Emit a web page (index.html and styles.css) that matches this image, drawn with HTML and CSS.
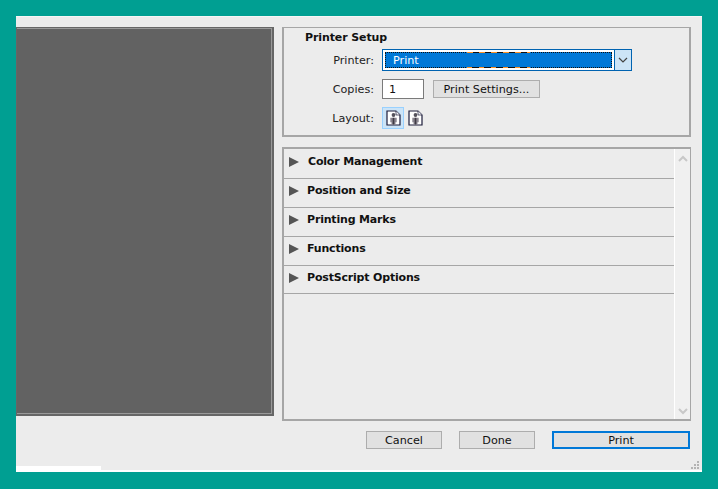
FILE: index.html
```html
<!DOCTYPE html>
<html lang="en">
<head>
<meta charset="utf-8">
<title>Print</title>
<link rel="stylesheet" href="styles.css">
</head>
<body>
<div class="window">
  <div class="main">
    <div class="preview"></div>
    <div class="side">
      <section class="setup">
        <h2 class="setup-title">Printer Setup</h2>
        <div class="form-row printer-row">
          <span class="label">Printer:</span>
          <div class="combo">
            <div class="combo-field">
              <div class="combo-value">Print</div>
              <span class="dash dash-top"></span>
              <span class="dash dash-bottom"></span>
            </div>
            <div class="combo-arrow">
              <svg width="10" height="6" viewBox="0 0 10 6"><path d="M1 1l4 4 4-4" fill="none" stroke="#444" stroke-width="1.2"/></svg>
            </div>
          </div>
        </div>
        <div class="form-row copies-row">
          <span class="label">Copies:</span>
          <div class="copies-input">1</div>
          <button class="btn settings-btn">Print Settings...</button>
        </div>
        <div class="form-row layout-row">
          <span class="label">Layout:</span>
          <div class="layout-btn layout-active">
            <svg width="15" height="16" viewBox="0 0 15 16"><path d="M1 1h9l4 4v10H1z" fill="#fff" stroke="#1c1c3a" stroke-width="1.2"/><path d="M10 1v4h4" fill="#f0f0f4" stroke="#1c1c3a" stroke-width=".7"/><circle cx="7.500" cy="5" r="1.900" fill="#55525c"/><path d="M4.300 7.800h6.400v4.500H9.500V14.500H5.500v-2.200H4.300z" fill="#8a858f"/><path d="M6.700 7.800h1.600v6.700H6.700z" fill="#3e3a44"/></svg>
          </div>
          <div class="layout-btn">
            <svg width="15" height="16" viewBox="0 0 15 16"><path d="M1 1h9l4 4v10H1z" fill="#fff" stroke="#1c1c3a" stroke-width="1.2"/><path d="M10 1v4h4" fill="#f0f0f4" stroke="#1c1c3a" stroke-width=".7"/><circle cx="7.500" cy="5" r="1.900" fill="#55525c"/><path d="M4.300 7.800h6.400v4.500H9.500V14.500H5.500v-2.200H4.300z" fill="#8a858f"/><path d="M6.700 7.800h1.600v6.700H6.700z" fill="#3e3a44"/></svg>
          </div>
        </div>
      </section>
      <section class="accordion">
        <div class="rows">
          <div class="row row-first"><span class="tri"></span><span class="row-text shift">Color Management</span></div>
          <div class="row"><span class="tri"></span><span class="row-text">Position and Size</span></div>
          <div class="row"><span class="tri"></span><span class="row-text">Printing Marks</span></div>
          <div class="row"><span class="tri"></span><span class="row-text">Functions</span></div>
          <div class="row row-last"><span class="tri"></span><span class="row-text">PostScript Options</span></div>
        </div>
        <div class="scrollbar">
          <svg width="10" height="7" viewBox="0 0 10 7"><path d="M1 6l4-4 4 4" fill="none" stroke="#c8c8c8" stroke-width="2"/></svg>
          <svg width="10" height="7" viewBox="0 0 10 7"><path d="M1 1l4 4 4-4" fill="none" stroke="#c8c8c8" stroke-width="2"/></svg>
        </div>
      </section>
    </div>
  </div>
  <div class="actions">
    <button class="btn action-btn">Cancel</button>
    <button class="btn action-btn">Done</button>
    <button class="btn print-btn">Print</button>
  </div>
  <div class="footer">
    <div class="footer-strip"></div>
  </div>
  <svg class="grip" width="8" height="8" viewBox="0 0 8 8" fill="#b4b4b4"><rect x="6" y="0" width="2" height="2"/><rect x="3" y="3" width="2" height="2"/><rect x="6" y="3" width="2" height="2"/><rect x="0" y="6" width="2" height="2"/><rect x="3" y="6" width="2" height="2"/><rect x="6" y="6" width="2" height="2"/></svg>
</div>
</body>
</html>
```

FILE: styles.css
```css
* { box-sizing: border-box; }
html, body { margin: 0; height: 100%; }
body {
  background: #009f92;
  padding: 16px;
  overflow: hidden;
  font-family: "DejaVu Sans", sans-serif;
  font-size: 11.2px;
  color: #111;
}
.window {
  position: relative;
  width: 686px;
  height: 456px;
  background: #ececec;
  border-top: 1px solid #f6f6f6;
  padding-top: 10px;
  display: flex;
  flex-direction: column;
}
.main { display: flex; height: 393px; }
.preview {
  width: 258px;
  height: 389px;
  background: #626262;
  border: 1px solid #666;
  border-right-width: 2px;
  border-bottom-width: 2px;
  box-shadow: inset -1px 0 0 #999, inset 0 1px 0 #999, inset 0 -1px 0 #999;
}
.side { margin-left: 8px; width: 409px; }
.setup {
  height: 110px;
  border: 2px solid #a6a6a6;
  border-top-width: 1px;
  padding-left: 21px;
}
.setup-title {
  margin: 0;
  font-size: 11px;
  letter-spacing: -0.1px;
  font-weight: bold;
  line-height: 16px;
  padding-top: 2px;
  color: #111;
}
.form-row { display: flex; align-items: center; }
.label { width: 69px; text-align: right; margin-right: 8px; color: #222; }
.printer-row { margin-top: 3px; height: 22px; }
.combo { display: flex; width: 250px; height: 22px; border: 1px solid #0063b1; background: #fff; }
.combo-field { position: relative; flex: 1; padding: 2px; }
.combo-value {
  height: 16px;
  background: #0078d7;
  color: #fff;
  outline: 1px dotted #111;
  outline-offset: -1px;
  padding-left: 8px;
  line-height: 17px;
}
.dash {
  position: absolute;
  left: 84px;
  width: 63px;
  height: 1px;
}
.dash-top { top: 2px; background: repeating-linear-gradient(90deg, #ff9326 0 6px, #111 6px 12px); }
.dash-bottom { bottom: 2px; background: repeating-linear-gradient(90deg, #ff9326 0 5px, #111 5px 12px); }
.combo-arrow {
  width: 17px;
  border-left: 1px solid #0063b1;
  background: #cce4f7;
  display: flex;
  align-items: center;
  justify-content: center;
}
.copies-row { margin-top: 8px; height: 20px; }
.copies-input {
  width: 42px;
  height: 20px;
  background: #fff;
  border: 1px solid #7a7a7a;
  padding-left: 6px;
  line-height: 19px;
}
.btn {
  font-family: inherit;
  font-size: 11.2px;
  color: #111;
  background: #e1e1e1;
  border: 1px solid #adadad;
  padding: 1px 0 0;
  height: 18px;
  line-height: 16px;
}
.settings-btn { width: 107px; margin-left: 9px; }
.layout-row { margin-top: 8px; height: 22px; }
.layout-btn { display: flex; align-items: center; justify-content: center; width: 22px; height: 22px; border: 1px solid transparent; }
.layout-active { background: #cce4f7; border-color: #99d1ff; }
.accordion {
  height: 274px;
  margin-top: 10px;
  border: 2px solid #a6a6a6;
  border-right-width: 1px;
  display: flex;
}
.rows { flex: 1; }
.row {
  height: 29px;
  border-bottom: 1px solid #a6a6a6;
  display: flex;
  align-items: center;
  padding: 0 0 4px 5px;
}
.row-first { height: 30px; padding-bottom: 3px; }
.row-last { height: 28px; padding-bottom: 3px; }
.tri {
  width: 0;
  height: 0;
  border-left: 10px solid #555;
  border-top: 5px solid transparent;
  border-bottom: 5px solid transparent;
  margin-right: 8px;
}
.row-text { font-size: 11px; letter-spacing: -0.18px; font-weight: bold; color: #111; margin-top: -2px; }
.shift { margin-left: 1px; }
.scrollbar {
  width: 16px;
  background: #f0f0f0;
  border-left: 1px solid #fff;
  display: flex;
  flex-direction: column;
  justify-content: space-between;
  align-items: center;
  padding: 6px 0 4px;
}
.actions { display: flex; margin-top: 11px; padding-left: 350px; }
.action-btn { width: 76px; margin-right: 17px; }
.print-btn { width: 138px; border: 2px solid #0078d7; padding-top: 0; }
.footer { position: relative; flex: 1; }
.footer-strip { position: absolute; left: 0; right: 0; bottom: 0; height: 2px; background: #fff; }
.footer-strip::before { content: ""; position: absolute; left: 0; bottom: 2px; width: 85px; height: 4px; background: #fff; }
.grip { position: absolute; right: 3px; bottom: 3px; }
```
